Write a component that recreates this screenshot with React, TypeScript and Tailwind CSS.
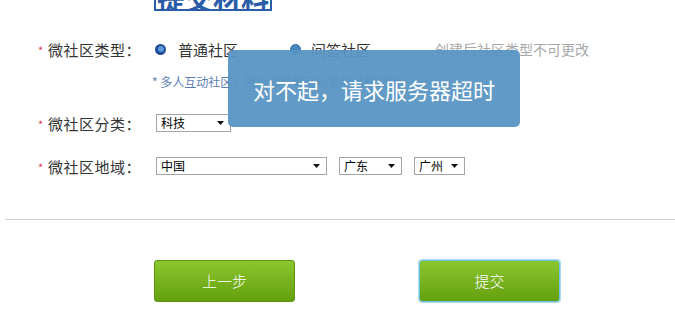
import React from 'react';

const font = { fontFamily: '"Microsoft YaHei", "Noto Sans CJK SC", sans-serif' };

const Caret: React.FC = () => (
  <svg width="7" height="4" viewBox="0 0 7 4" className="shrink-0">
    <path d="M0 0h7L3.5 4z" fill="#111" />
  </svg>
);

const Select: React.FC<{ value: string; width: string }> = ({ value, width }) => (
  <div
    className={`${width} h-[18px] border border-[#a5a5a5] bg-white flex items-center justify-between pl-[4px] pr-[6px] text-[12px] leading-none text-black`}
  >
    <span>{value}</span>
    <Caret />
  </div>
);

const Label: React.FC<{ text: string }> = ({ text }) => (
  <div className="w-[118px] flex items-center shrink-0">
    <span className="text-[#d9344a] text-[11px] w-[10px] pt-[3px]">*</span>
    <span className="text-[15px] text-[#333] leading-none tracking-[0.5px]">{text}</span>
  </div>
);

const App: React.FC = () => {
  return (
    <div className="relative w-[675px] h-[334px] overflow-hidden bg-white" style={font}>
      {/* cut-off title */}
      <div className="ml-[154px] w-[118px] h-[11px] border-2 border-t-0 border-[#2b5ca8] overflow-hidden flex justify-center items-end">
        <span className="text-[28px] font-bold text-[#2b5ca8] leading-none -mb-[3px] whitespace-nowrap">提交材料</span>
      </div>

      <div className="pl-[38px]">
        <div className="mt-[28px] h-[20px] flex items-center">
          <Label text="微社区类型：" />
          <span className="ml-[-1px] w-[11px] h-[11px] rounded-full bg-[#1f4f98] flex items-center justify-center">
            <span className="w-[6px] h-[6px] rounded-full bg-[#5c98d8]" />
          </span>
          <span className="ml-[12px] text-[15px] text-[#333] leading-none">普通社区</span>
          <span className="ml-[52px] w-[11px] h-[11px] rounded-full bg-[#4a86c0] border border-[#3a6ea8]" />
          <span className="ml-[10px] text-[15px] text-[#333] leading-none">问答社区</span>
          <span className="ml-[64px] text-[14px] text-[#a8a8a8] leading-none">创建后社区类型不可更改</span>
        </div>

        <div className="mt-[15px] h-[16px] flex items-center pl-[114px] text-[12px] text-[#5b7db5] leading-none">
          * 多人互动社区，所有成员都可以参与话题讨论
        </div>

        <div className="mt-[23px] h-[20px] flex items-center">
          <Label text="微社区分类：" />
          <Select value="科技" width="w-[75px]" />
        </div>

        <div className="mt-[23px] h-[20px] flex items-center">
          <Label text="微社区地域：" />
          <Select value="中国" width="w-[171px]" />
          <div className="ml-[12px]">
            <Select value="广东" width="w-[63px]" />
          </div>
          <div className="ml-[12px]">
            <Select value="广州" width="w-[51px]" />
          </div>
        </div>
      </div>

      <div className="mt-[43px] ml-[5px] border-t border-[#cfcfcf]" />

      <div className="mt-[40px] flex pl-[154px] gap-[124px]">
        <button className="w-[141px] h-[42px] rounded-[3px] border border-[#5e9410] bg-gradient-to-b from-[#8cc62e] to-[#64a00c] text-white text-[15px] font-light">
          上一步
        </button>
        <button className="w-[141px] h-[42px] rounded-[3px] border border-[#6ec3e6] ring-1 ring-[#a9dcf0] bg-gradient-to-b from-[#8cc62e] to-[#64a00c] text-white text-[15px] font-light">
          提交
        </button>
      </div>

      {/* toast */}
      <div className="absolute left-[228px] top-[50px] w-[292px] h-[77px] rounded-[5px] bg-[#5895c3]/95 flex items-center justify-center">
        <span className="text-white text-[22px] leading-none">对不起，请求服务器超时</span>
      </div>
    </div>
  );
};

export default App;
